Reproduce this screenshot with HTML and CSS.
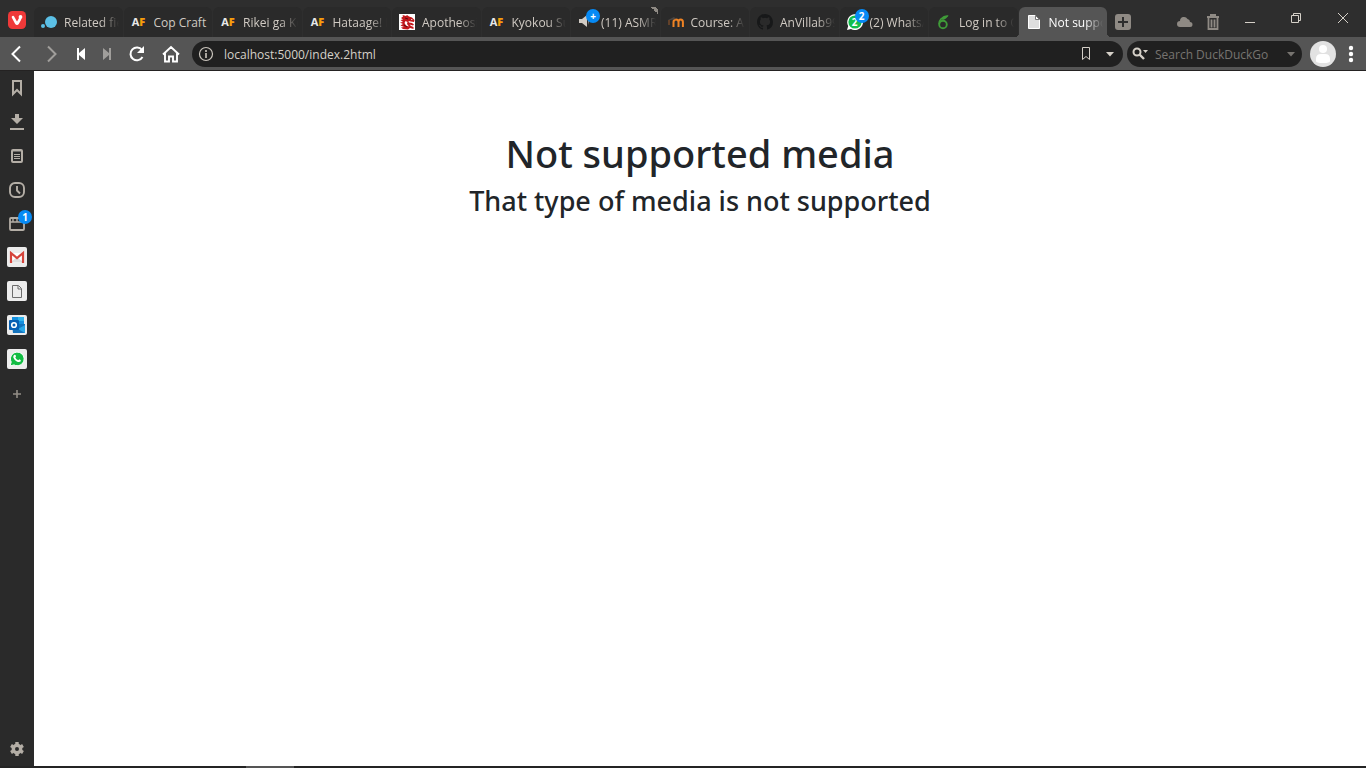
FILE: index.html
```html
<!DOCTYPE html>
<html lang="en">
<head>
<meta charset="utf-8">
<title>Not supported media</title>
<link rel="stylesheet" href="styles.css">
</head>
<body>
<div class="browser">
  <header class="titlebar">
    <button class="menu-button" aria-label="Vivaldi menu">
      <svg width="18" height="18" viewBox="0 0 18 18"><rect width="18" height="18" rx="4.5" fill="#ef3939"/><path d="M5 6.2 8.2 12q.8 1.400 1.600 0L12 8" fill="none" stroke="#fff" stroke-width="2.600" stroke-linecap="round" stroke-linejoin="round"/><circle cx="12.500" cy="6" r="1.900" fill="#fff"/></svg>
    </button>
    <nav class="tabs" aria-label="Tabs">
      <button class="tab"><svg class="fav" viewBox="0 0 16 16"><circle cx="10" cy="8" r="6" fill="#5bc0e6"/><circle cx="2" cy="12" r="2" fill="#5bc0e6"/></svg><span class="label">Related fie</span></button>
      <button class="tab"><span class="fav af">A<b>F</b></span><span class="label whole">Cop Craft</span></button>
      <button class="tab"><span class="fav af">A<b>F</b></span><span class="label">Rikei ga Ko</span></button>
      <button class="tab"><span class="fav af">A<b>F</b></span><span class="label">Hataage! K</span></button>
      <button class="tab"><svg class="fav" viewBox="0 0 16 16"><path fill="#fff" d="M0 0h16v16H0z"/><path fill="#c3171b" d="M2 4 4 2.500 3.500 1 7 2l1-1 2 1.500 3 1L15.500 6 15 8l-3-.5L9.500 7l.5 1.500 3 .5 2 1.500-1 1-3.500-1L12 12l2.500 1v2L11 14l-2 1.500-5-.5-2-1.500 3-.5-3.500-1.500L4 10 1 8.500 4 8 1.500 6 4 5.500z"/><path d="m6.500 7 2 1-.5 2 2 2.500-3-1-1.500-2.500zM12 5l2 1h-2z" fill="#fff"/><path d="M6 4l3 1M5 11l3 2" stroke="#501012"/></svg><span class="label">Apotheosi</span></button>
      <button class="tab"><span class="fav af">A<b>F</b></span><span class="label">Kyokou Su</span></button>
      <button class="tab loading"><svg class="fav" viewBox="0 0 16 16"><path fill="#d0cac3" d="M1 5h3l5-4v12l-5-4H1zM10 5h1l-1 6z"/></svg><span class="badge tab-badge">+</span><span class="label">(11) ASMR</span></button>
      <button class="tab"><svg class="fav" viewBox="0 0 16 16"><path d="M5.500 13V8q0-2.500 2.500-2.500t2.500 2.500v5M10.500 8q0-2.500 2.200-2.500t2.200 2.500v5" fill="none" stroke="#ef8324" stroke-width="2"/><path d="m0 6 6-3 2 2-5 1z" fill="#4b4541"/><path d="M1 6v5" stroke="#9b5929"/></svg><span class="label">Course: An</span></button>
      <button class="tab"><svg class="fav" viewBox="0 0 16 16"><path fill="#171819" d="M8 0C3.580 0 0 3.580 0 8c0 3.540 2.290 6.530 5.470 7.590.4.070.55-.17.55-.38 0-.19-.01-.82-.01-1.490-2.010.37-2.530-.49-2.690-.94-.09-.23-.48-.94-.82-1.130-.28-.15-.68-.52-.01-.53.63-.01 1.080.58 1.230.82.72 1.210 1.870.87 2.330.66.07-.52.28-.87.51-1.070-1.780-.2-3.640-.89-3.640-3.950 0-.87.31-1.590.82-2.150-.08-.2-.36-1.020.08-2.120 0 0 .67-.21 2.200.82a7.600 7.600 0 0 1 4 0c1.530-1.040 2.200-.82 2.200-.82.44 1.100.16 1.920.08 2.120.51.56.82 1.270.82 2.150 0 3.070-1.870 3.750-3.650 3.950.29.25.54.73.54 1.480 0 1.070-.01 1.930-.01 2.200 0 .21.15.46.55.38A8 8 0 0 0 16 8c0-4.420-3.580-8-8-8z"/></svg><span class="label">AnVillab99</span></button>
      <button class="tab"><svg class="fav" viewBox="0 0 16 16"><path d="m0 16 1.200-4A7.900 7.900 0 1 1 4 14.900z" fill="#fff"/><circle cx="8" cy="8" r="6.600" fill="#13bd4b"/></svg><span class="wa-count">2</span><span class="badge tab-badge">2</span><span class="label">(2) WhatsA</span></button>
      <button class="tab"><svg class="fav" viewBox="0 0 16 16"><circle cx="7" cy="10.500" r="3.800" fill="none" stroke="#3f9b38" stroke-width="1.900"/><path d="M3.200 10C3 6 6 3 12 2M5 5q3-3 6-3-2 3-5 3" fill="none" stroke="#3f9b38" stroke-width="1.700"/></svg><span class="label">Log in to O</span></button>
      <button class="tab active" aria-current="page"><svg class="fav" viewBox="0 0 16 16"><path d="M2.500 1.500h7l4 4v9h-11z" fill="#dedede" stroke="#fff"/><path d="M9.500 1.500v4h4z" fill="#fff" stroke="#777"/></svg><span class="label">Not suppo</span></button>
    </nav>
    <button class="new-tab" aria-label="New tab"><svg width="16" height="16" viewBox="0 0 16 16"><rect width="16" height="16" rx="3" fill="#8f8a84"/><path d="M8 3v10M3 8h10" stroke="#2e2e2e" stroke-width="2"/></svg></button>
    <div class="tab-tools">
      <button aria-label="Synced tabs"><svg width="16" height="16" viewBox="0 0 16 16"><path fill="#8f8a84" d="M3 13a3 3 0 0 1 0-6 4 4 0 0 1 7.500-2A3 3 0 0 1 13 8a2.500 2.500 0 0 1 0 5z"/></svg></button>
      <button aria-label="Closed tabs"><svg width="14" height="16" viewBox="0 0 14 16"><path d="M4 1h6M1 3h12M2.500 4v11h9V4M5.500 5.500v8M8.500 5.500v8" fill="none" stroke="#8f8a84" stroke-width="1.800"/></svg></button>
    </div>
    <div class="window-controls">
      <button aria-label="Minimize"><svg width="12" height="12"><path d="M1 10.500h10" stroke="#d5d0c8"/></svg></button>
      <button aria-label="Restore"><svg width="12" height="12"><path d="M1.500 3.500h7v7h-7zM3.500 3V1.500h7v7H9" fill="none" stroke="#d5d0c8"/></svg></button>
      <button aria-label="Close"><svg width="12" height="12"><path d="m1 1 10 10M11 1 1 11" stroke="#d5d0c8"/></svg></button>
    </div>
  </header>

  <div class="toolbar">
    <button class="tool" aria-label="Back"><svg width="18" height="18"><path d="M12 1.500 4.500 9l7.500 7.500" fill="none" stroke="#fff" stroke-width="2"/></svg></button>
    <button class="tool" aria-label="Forward"><svg width="18" height="18"><path d="M6 1.500 13.500 9 6 16.500" fill="none" stroke="#a09e9b" stroke-width="2"/></svg></button>
    <button class="tool narrow" aria-label="Rewind"><svg width="18" height="18"><path d="M5 3h2v5l6-5v12l-6-5v5H5z" fill="#fff"/></svg></button>
    <button class="tool narrow" aria-label="Fast forward"><svg width="18" height="18"><path d="M13 3h-2v5L5 3v12l6-5v5h2z" fill="#a09e9b"/></svg></button>
    <button class="tool" aria-label="Reload"><svg width="18" height="18"><path d="M14.500 12A6.400 6.400 0 1 1 14 5" fill="none" stroke="#fff" stroke-width="2"/><path d="M16 1v7H9z" fill="#fff"/></svg></button>
    <button class="tool" aria-label="Home"><svg width="18" height="18"><path d="M1 9.500 9 2l8 7.500M3 8v8.500h4v-5h4v5h4V8" fill="none" stroke="#fff" stroke-width="1.900"/></svg></button>
    <div class="address">
      <svg width="16" height="16"><circle cx="8" cy="8" r="6.500" fill="none" stroke="#cbc6be" stroke-width="1.200"/><path d="M8 7v5M8 4v2" stroke="#cbc6be" stroke-width="1.600"/></svg>
      <input type="text" value="localhost:5000/index.2html" aria-label="Address">
      <button aria-label="Bookmark page"><svg width="16" height="16"><path d="M4.500 1.500h7v12L8 10.500l-3.500 3z" fill="none" stroke="#d5d0c8"/></svg></button>
      <button aria-label="Address history"><svg width="16" height="16"><path d="M4 6h8l-4 4.500z" fill="#d5d0c8"/></svg></button>
    </div>
    <div class="search">
      <button aria-label="Search engine"><svg width="16" height="16"><circle cx="5" cy="6" r="3.500" fill="none" stroke="#d5d0c8" stroke-width="2"/><path d="m7.500 8.500 4.500 4.500" stroke="#d5d0c8" stroke-width="2.400"/><path d="M11 4h5l-2.500 3z" fill="#d5d0c8"/></svg></button>
      <input type="text" placeholder="Search DuckDuckGo" aria-label="Search DuckDuckGo">
      <button aria-label="Search options"><svg width="16" height="16"><path d="M4 6h8l-4 4.500z" fill="#777470"/></svg></button>
    </div>
    <button class="profile" aria-label="Profile"><svg width="26" height="26"><circle cx="13" cy="13" r="13" fill="#e2e2e2"/><circle cx="13" cy="8" r="4" fill="#fff"/><path d="M6 18q0-5 5-5h4q5 0 5 5v2q0 2-7 2t-7-2z" fill="#fff"/></svg></button>
    <button class="more" aria-label="More"><svg width="6" height="18" fill="#fff"><circle cx="3" cy="3" r="2.200"/><circle cx="3" cy="9" r="2.200"/><circle cx="3" cy="15" r="2.200"/></svg></button>
  </div>

  <div class="workspace">
    <aside class="panel">
      <button aria-label="Bookmarks"><svg width="16" height="18"><path d="M4 2h8v13l-4-4-4 4z" fill="none" stroke="#b4aea6" stroke-width="2"/></svg></button>
      <button aria-label="Downloads"><svg width="16" height="18"><path d="M6 1h4v4h4l-6 6-6-6h4z" fill="#b4aea6"/><path d="M1 16h14" stroke="#b4aea6" stroke-width="2"/></svg></button>
      <button aria-label="Notes"><svg width="16" height="18"><rect x="3" y="3" width="10" height="12" rx="1" fill="none" stroke="#b4aea6" stroke-width="2"/><path d="M3 4h10M5 7.500h6M5 9.500h6M5 11.500h6" stroke="#b4aea6"/></svg></button>
      <button aria-label="History"><svg width="16" height="18"><rect x="1" y="2" width="14" height="14" rx="5" fill="none" stroke="#b4aea6" stroke-width="1.900"/><path d="M8 5v4.500l3 3" fill="none" stroke="#b4aea6" stroke-width="1.900"/></svg></button>
      <button aria-label="Window"><svg width="16" height="18"><rect x="1" y="3" width="14" height="12" rx="1" fill="none" stroke="#b4aea6" stroke-width="1.800"/><path d="M1 7h14M4 3v4M8 3v4M12 3v4" stroke="#b4aea6" stroke-width="1.400"/></svg><span class="badge panel-badge">1</span></button>
      <button class="web" aria-label="Gmail"><svg width="20" height="20"><rect width="20" height="20" rx="2" fill="#ececec"/><path d="M4 6h12v9H4z" fill="#fff"/><path d="m4 15 6-5 6 5" fill="#dedede"/><path d="M4 16V6l6 5 6-5v10" fill="none" stroke="#d5443b" stroke-width="2.200"/></svg></button>
      <button class="web" aria-label="Web panel"><svg width="20" height="20"><rect width="20" height="20" rx="2" fill="#ececec"/><path d="M5.500 4.500h6l3 3v9h-9zM11 5v3h3" fill="none" stroke="#6c6c6c"/></svg></button>
      <button class="web" aria-label="Outlook"><svg width="20" height="20"><rect width="20" height="20" rx="2" fill="#ececec"/><path d="M5 2h12v8H5z" fill="#1490df"/><path d="M11 2h6v4h-6z" fill="#32b5ee"/><path d="M5 9h13v9H6z" fill="#1473bd"/><path d="m18 10-7 4 7 4z" fill="#28a8e8"/><rect x="2" y="5" width="10" height="10" rx="1" fill="#0860b3"/><circle cx="7" cy="10" r="2.300" fill="none" stroke="#fff" stroke-width="1.600"/></svg></button>
      <button class="web" aria-label="WhatsApp"><svg width="20" height="20"><rect width="20" height="20" rx="2" fill="#ececec"/><path d="m3 17 1.200-4A6.800 6.800 0 1 1 7 15.900z" fill="#12bd43" stroke="#fff"/><path d="M7 6q2-1 2 1.500l-.7 1q1 2 3 2.800l1-1q2 .5 1.500 2-1.500 1.500-4 .2Q7.200 11 6.300 8.500 6 7 7 6z" fill="#fff"/></svg></button>
      <button aria-label="Add web panel"><svg width="16" height="16"><path d="M8 4v8M4 8h8" stroke="#928d86" stroke-width="1.600"/></svg></button>
      <button class="settings" aria-label="Settings"><svg width="16" height="16"><circle cx="8" cy="8" r="3.700" fill="none" stroke="#b4aea6" stroke-width="3.400"/><path d="M8 1v2.500M8 12.500V15M2 4.500l2 1.200M12 10.300l2 1.200M2 11.500l2-1.200M12 5.700l2-1.200" stroke="#b4aea6" stroke-width="3.400"/></svg></button>
    </aside>
    <main class="page">
      <h1>Not supported media</h1>
      <h3>That type of media is not supported</h3>
    </main>
  </div>
  <footer class="taskbar-edge"><span></span></footer>
</div>
</body>
</html>
```

FILE: styles.css
```css
* { box-sizing: border-box; }
body {
  margin: 0;
  font-family: "Noto Sans", "Open Sans", sans-serif;
  color: #212529;
  background: #fff;
}
button {
  display: flex;
  align-items: center;
  justify-content: center;
  flex: none;
  padding: 0;
  border: 0;
  background: none;
  color: inherit;
  font: inherit;
}
svg { display: block; flex: none; }
input {
  flex: 1;
  min-width: 0;
  padding: 3px 0 0;
  border: 0;
  outline: 0;
  background: none;
  color: #d5d0c8;
  font: 12px/18px "Open Sans", sans-serif;
}
.browser {
  display: flex;
  flex-direction: column;
  min-height: 100vh;
}

.titlebar {
  display: flex;
  height: 37px;
  background: #2e2e2e;
  color: #d0cac3;
}
.menu-button { width: 34px; padding-top: 3px; }
.tabs {
  display: flex;
  flex: 0 1 1073px;
  gap: 1px;
  min-width: 0;
  padding-top: 7px;
}
.tab {
  position: relative;
  flex: 1 1 0;
  justify-content: flex-start;
  gap: 7px;
  min-width: 0;
  padding: 0 4px 0 7px;
  border-radius: 6px 6px 0 0;
  background: #2a2a2a;
}
.fav { width: 16px; height: 16px; flex: none; }
.label {
  flex: 1;
  overflow: hidden;
  padding-top: 2px;
  text-align: left;
  white-space: nowrap;
  font: 12px/18px "Open Sans", sans-serif;
  mask-image: linear-gradient(to right, #000 calc(100% - 18px), transparent);
}
.whole { mask-image: none; }
.af {
  color: #e8e8e8;
  font: bold 11px/16px "Open Sans", sans-serif;
  text-align: center;
}
.af b { color: #f79d0b; }
.badge {
  position: absolute;
  width: 14px;
  height: 14px;
  border-radius: 50%;
  background: #068af5;
  color: #fff;
  font: bold 10px/14px "Open Sans", sans-serif;
  text-align: center;
}
.tab-badge { top: 2px; left: 15px; }
.panel-badge { top: 3px; right: 2px; }
.wa-count {
  position: absolute;
  left: 7px;
  width: 16px;
  color: #fff;
  font: bold 10px/16px "Open Sans", sans-serif;
  text-align: center;
}
.loading::after {
  content: "";
  position: absolute;
  top: 0;
  right: 2px;
  width: 7px;
  height: 7px;
  background: linear-gradient(45deg, transparent 50%, #8f8a84 50% 85%, transparent 85%);
}
.active { background: #555; color: #fff; }
.active::before,
.active::after {
  content: "";
  position: absolute;
  bottom: 0;
  width: 4px;
  height: 4px;
}
.active::before { left: -4px; background: radial-gradient(circle at 0 0, transparent 4px, #555 4px); }
.active::after { right: -4px; background: radial-gradient(circle at 100% 0, transparent 4px, #555 4px); }
.new-tab { width: 32px; padding-top: 7px; }
.tab-tools { display: flex; margin-left: auto; padding-top: 7px; }
.tab-tools button { width: 28px; }
.window-controls { display: flex; width: 139px; }
.window-controls button { flex: 1; padding-bottom: 1px; }

.toolbar {
  display: flex;
  align-items: center;
  height: 34px;
  background: #555;
  border-bottom: 1px solid #242222;
}
.tool { width: 34px; height: 32px; }
.narrow { width: 26px; }
.address,
.search {
  display: flex;
  align-items: center;
  height: 26px;
  border-radius: 13px;
  background: #202020;
}
.address { flex: 1; margin-left: 4px; padding: 0 1px 0 6px; }
.address input { margin-left: 10px; }
.address button { width: 24px; }
.search { width: 175px; margin-left: 4px; padding: 0 3px 0 5px; }
.search input { margin: 0 12px 0 7px; }
.search input::placeholder { color: #777470; opacity: 1; }
.profile { margin-left: 8px; }
.more { width: 30px; }

.workspace { display: flex; flex: 1; }
.panel {
  display: flex;
  flex-direction: column;
  flex: none;
  width: 34px;
  background: #2a2a2a;
}
.panel button { position: relative; height: 34px; }
.panel .web { padding-bottom: 2px; }
.panel .settings { margin-top: auto; }
.page { flex: 1; padding-top: 58px; text-align: center; }
.page h1 { margin: 0 0 8px; font-size: 38px; font-weight: 500; line-height: 48px; }
.page h3 { margin: 0; font-size: 27px; font-weight: 500; line-height: 32px; }
.taskbar-edge { display: flex; height: 2px; padding-left: 18%; background: #242424; }
.taskbar-edge span { width: 48px; background: #555; }
```
